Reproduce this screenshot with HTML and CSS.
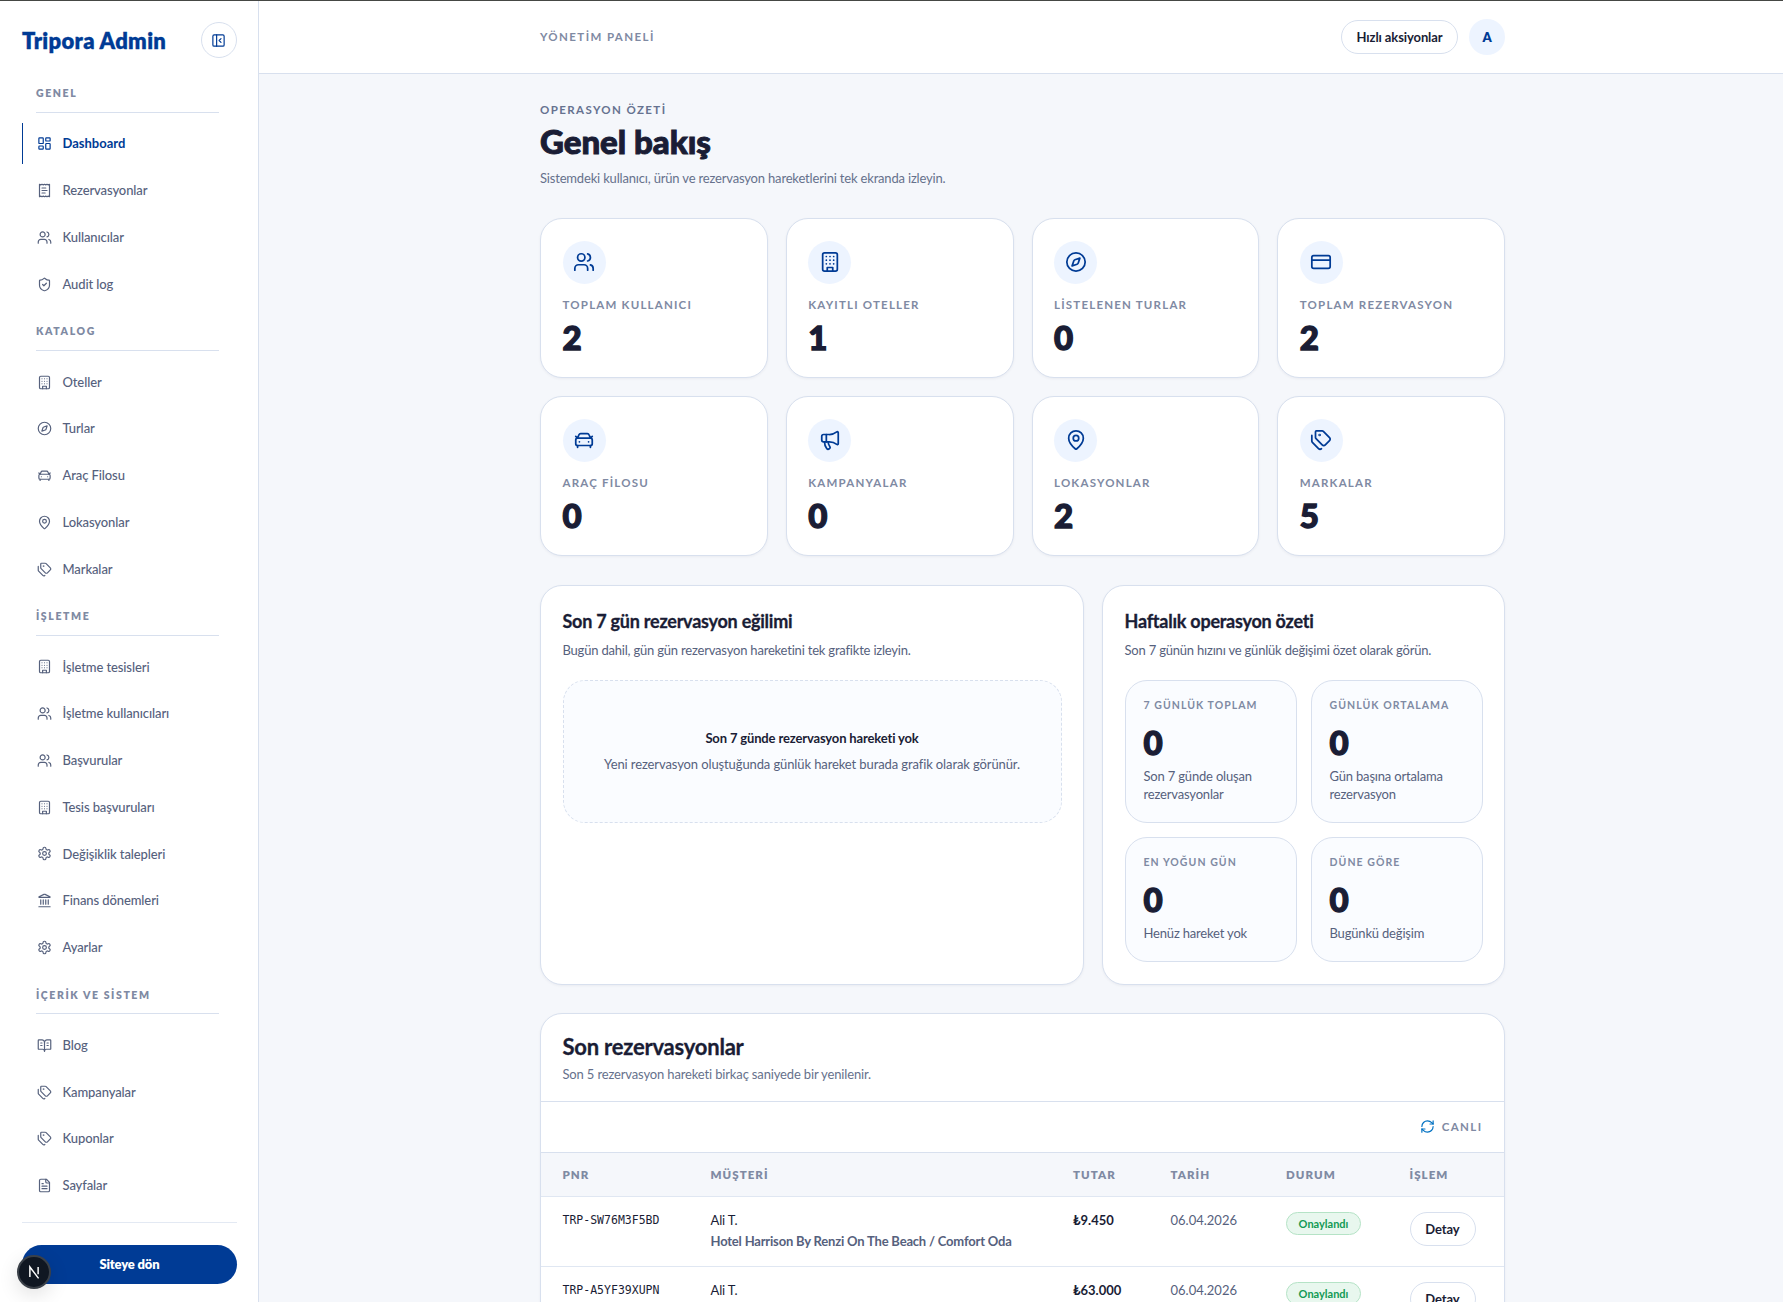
FILE: index.html
```html
<!DOCTYPE html>
<html lang="tr">
<head>
  <meta charset="UTF-8" />
  <title>Tripora Admin</title>
  <link rel="stylesheet" href="styles.css">
</head>
<body>

  <!-- icons -->
  <svg class="sprite" xmlns="http://www.w3.org/2000/svg">
    <symbol id="i-dashboard" viewBox="0 0 24 24"><rect width="7" height="9" x="3" y="3" rx="1"/><rect width="7" height="5" x="14" y="3" rx="1"/><rect width="7" height="9" x="14" y="12" rx="1"/><rect width="7" height="5" x="3" y="16" rx="1"/></symbol>
    <symbol id="i-receipt" viewBox="0 0 24 24"><path d="M4 2v20l2-1 2 1 2-1 2 1 2-1 2 1 2-1 2 1V2l-2 1-2-1-2 1-2-1-2 1-2-1-2 1Z"/><path d="M14 8H8M16 12H8M13 16H8"/></symbol>
    <symbol id="i-users" viewBox="0 0 24 24"><path d="M16 21v-2a4 4 0 0 0-4-4H6a4 4 0 0 0-4 4v2"/><circle cx="9" cy="7" r="4"/><path d="M22 21v-2a4 4 0 0 0-3-3.87M16 3.13a4 4 0 0 1 0 7.75"/></symbol>
    <symbol id="i-shield" viewBox="0 0 24 24"><path d="M20 13c0 5-3.5 7.5-7.66 8.95a1 1 0 0 1-.67-.01C7.5 20.5 4 18 4 13V6a1 1 0 0 1 1-1c2 0 4.5-1.2 6.24-2.72a1.17 1.17 0 0 1 1.52 0C14.51 3.81 17 5 19 5a1 1 0 0 1 1 1z"/><path d="m9 12 2 2 4-4"/></symbol>
    <symbol id="i-building" viewBox="0 0 24 24"><rect width="16" height="20" x="4" y="2" rx="2"/><path d="M9 22v-4h6v4M8 6h.01M16 6h.01M12 6h.01M12 10h.01M12 14h.01M16 10h.01M16 14h.01M8 10h.01M8 14h.01"/></symbol>
    <symbol id="i-compass" viewBox="0 0 24 24"><circle cx="12" cy="12" r="10"/><path d="m16.24 7.76-1.804 5.411a2 2 0 0 1-1.265 1.265L7.76 16.24l1.804-5.411a2 2 0 0 1 1.265-1.265z"/></symbol>
    <symbol id="i-car" viewBox="0 0 24 24"><path d="m21 8-2 2-1.5-3.7A2 2 0 0 0 15.646 5H8.4a2 2 0 0 0-1.903 1.257L5 10 3 8M7 14h.01M17 14h.01"/><rect width="18" height="8" x="3" y="10" rx="2"/><path d="M5 18v2M19 18v2"/></symbol>
    <symbol id="i-pin" viewBox="0 0 24 24"><path d="M20 10c0 4.993-5.539 10.193-7.399 11.799a1 1 0 0 1-1.202 0C9.539 20.193 4 14.993 4 10a8 8 0 0 1 16 0"/><circle cx="12" cy="10" r="3"/></symbol>
    <symbol id="i-tags" viewBox="0 0 24 24"><path d="M13.172 2a2 2 0 0 1 1.414.586l6.71 6.71a2.4 2.4 0 0 1 0 3.408l-4.592 4.592a2.4 2.4 0 0 1-3.408 0l-6.71-6.71A2 2 0 0 1 6 9.172V3a1 1 0 0 1 1-1z"/><path d="M2 7v6.172a2 2 0 0 0 .586 1.414l6.71 6.71a2.4 2.4 0 0 0 3.191.193"/><circle cx="10.5" cy="6.5" r=".5"/></symbol>
    <symbol id="i-settings" viewBox="0 0 24 24"><path d="M12.22 2h-.44a2 2 0 0 0-2 2v.18a2 2 0 0 1-1 1.73l-.43.25a2 2 0 0 1-2 0l-.15-.08a2 2 0 0 0-2.73.73l-.22.38a2 2 0 0 0 .73 2.73l.15.1a2 2 0 0 1 1 1.72v.51a2 2 0 0 1-1 1.74l-.15.09a2 2 0 0 0-.73 2.73l.22.38a2 2 0 0 0 2.73.73l.15-.08a2 2 0 0 1 2 0l.43.25a2 2 0 0 1 1 1.73V20a2 2 0 0 0 2 2h.44a2 2 0 0 0 2-2v-.18a2 2 0 0 1 1-1.73l.43-.25a2 2 0 0 1 2 0l.15.08a2 2 0 0 0 2.73-.73l.22-.39a2 2 0 0 0-.73-2.73l-.15-.08a2 2 0 0 1-1-1.74v-.5a2 2 0 0 1 1-1.74l.15-.09a2 2 0 0 0 .73-2.73l-.22-.38a2 2 0 0 0-2.73-.73l-.15.08a2 2 0 0 1-2 0l-.43-.25a2 2 0 0 1-1-1.73V4a2 2 0 0 0-2-2z"/><circle cx="12" cy="12" r="3"/></symbol>
    <symbol id="i-bank" viewBox="0 0 24 24"><path d="M11.12 2.198a2 2 0 0 1 1.76.006l7.866 3.847c.476.233.31.949-.22.949H3.474c-.53 0-.695-.716-.22-.949z"/><path d="M6 18v-7M10 18v-7M14 18v-7M18 18v-7M3 22h18"/></symbol>
    <symbol id="i-book" viewBox="0 0 24 24"><path d="M12 7v14M16 12h2M16 8h2M6 12h2M6 8h2"/><path d="M3 18a1 1 0 0 1-1-1V4a1 1 0 0 1 1-1h5a4 4 0 0 1 4 4 4 4 0 0 1 4-4h5a1 1 0 0 1 1 1v13a1 1 0 0 1-1 1h-6a3 3 0 0 0-3 3 3 3 0 0 0-3-3z"/></symbol>
    <symbol id="i-file" viewBox="0 0 24 24"><path d="M15 2H6a2 2 0 0 0-2 2v16a2 2 0 0 0 2 2h12a2 2 0 0 0 2-2V7Z"/><path d="M14 2v4a2 2 0 0 0 2 2h4M10 9H8M16 13H8M16 17H8"/></symbol>
    <symbol id="i-panel" viewBox="0 0 24 24"><rect width="18" height="18" x="3" y="3" rx="2"/><path d="M9 3v18M16 15l-3-3 3-3"/></symbol>
    <symbol id="i-card" viewBox="0 0 24 24"><rect width="20" height="14" x="2" y="5" rx="2"/><path d="M2 10h20"/></symbol>
    <symbol id="i-megaphone" viewBox="0 0 24 24"><path d="M11 6a13 13 0 0 0 8.4-2.8A1 1 0 0 1 21 4v12a1 1 0 0 1-1.6.8A13 13 0 0 0 11 14H5a2 2 0 0 1-2-2V8a2 2 0 0 1 2-2z"/><path d="M6 14a12 12 0 0 0 2.4 7.2 2 2 0 0 0 3.2-2.4A8 8 0 0 1 10 14M8 6v8"/></symbol>
    <symbol id="i-refresh" viewBox="0 0 24 24"><path d="M3 12a9 9 0 0 1 9-9 9.75 9.75 0 0 1 6.74 2.74L21 8"/><path d="M21 3v5h-5M21 12a9 9 0 0 1-9 9 9.75 9.75 0 0 1-6.74-2.74L3 16"/><path d="M8 16H3v5"/></symbol>
  </svg>

  <aside class="sidebar">
    <div class="sidebar-head">
      <span class="brand">Tripora Admin</span>
      <button class="collapse"><svg class="icon"><use href="#i-panel"/></svg></button>
    </div>

    <nav class="nav">
      <h2 class="nav-title">GENEL</h2>
      <a class="nav-item active"><svg class="icon"><use href="#i-dashboard"/></svg>Dashboard</a>
      <a class="nav-item"><svg class="icon"><use href="#i-receipt"/></svg>Rezervasyonlar</a>
      <a class="nav-item"><svg class="icon"><use href="#i-users"/></svg>Kullanıcılar</a>
      <a class="nav-item"><svg class="icon"><use href="#i-shield"/></svg>Audit log</a>

      <h2 class="nav-title">KATALOG</h2>
      <a class="nav-item"><svg class="icon"><use href="#i-building"/></svg>Oteller</a>
      <a class="nav-item"><svg class="icon"><use href="#i-compass"/></svg>Turlar</a>
      <a class="nav-item"><svg class="icon"><use href="#i-car"/></svg>Araç Filosu</a>
      <a class="nav-item"><svg class="icon"><use href="#i-pin"/></svg>Lokasyonlar</a>
      <a class="nav-item"><svg class="icon"><use href="#i-tags"/></svg>Markalar</a>

      <h2 class="nav-title">İŞLETME</h2>
      <a class="nav-item"><svg class="icon"><use href="#i-building"/></svg>İşletme tesisleri</a>
      <a class="nav-item"><svg class="icon"><use href="#i-users"/></svg>İşletme kullanıcıları</a>
      <a class="nav-item"><svg class="icon"><use href="#i-users"/></svg>Başvurular</a>
      <a class="nav-item"><svg class="icon"><use href="#i-building"/></svg>Tesis başvuruları</a>
      <a class="nav-item"><svg class="icon"><use href="#i-settings"/></svg>Değişiklik talepleri</a>
      <a class="nav-item"><svg class="icon"><use href="#i-bank"/></svg>Finans dönemleri</a>
      <a class="nav-item"><svg class="icon"><use href="#i-settings"/></svg>Ayarlar</a>

      <h2 class="nav-title">İÇERİK VE SİSTEM</h2>
      <a class="nav-item"><svg class="icon"><use href="#i-book"/></svg>Blog</a>
      <a class="nav-item"><svg class="icon"><use href="#i-tags"/></svg>Kampanyalar</a>
      <a class="nav-item"><svg class="icon"><use href="#i-tags"/></svg>Kuponlar</a>
      <a class="nav-item"><svg class="icon"><use href="#i-file"/></svg>Sayfalar</a>
    </nav>

    <div class="sidebar-foot">
      <a class="back-btn">Siteye dön</a>
    </div>
  </aside>

  <div class="main">
    <header class="topbar">
      <div class="wrap topbar-inner">
        <span class="topbar-title">YÖNETİM PANELİ</span>
        <div class="topbar-actions">
          <button class="pill-btn quick">Hızlı aksiyonlar</button>
          <span class="avatar">A</span>
        </div>
      </div>
    </header>

    <main class="wrap content">
      <p class="eyebrow">OPERASYON ÖZETİ</p>
      <h1 class="page-title">Genel bakış</h1>
      <p class="lead">Sistemdeki kullanıcı, ürün ve rezervasyon hareketlerini tek ekranda izleyin.</p>

      <section class="stats">
        <div class="card stat">
          <div class="stat-icon"><svg class="icon"><use href="#i-users"/></svg></div>
          <div class="stat-label">TOPLAM KULLANICI</div>
          <div class="stat-value">2</div>
        </div>
        <div class="card stat">
          <div class="stat-icon"><svg class="icon"><use href="#i-building"/></svg></div>
          <div class="stat-label">KAYITLI OTELLER</div>
          <div class="stat-value">1</div>
        </div>
        <div class="card stat">
          <div class="stat-icon"><svg class="icon"><use href="#i-compass"/></svg></div>
          <div class="stat-label">LİSTELENEN TURLAR</div>
          <div class="stat-value">0</div>
        </div>
        <div class="card stat">
          <div class="stat-icon"><svg class="icon"><use href="#i-card"/></svg></div>
          <div class="stat-label">TOPLAM REZERVASYON</div>
          <div class="stat-value">2</div>
        </div>
        <div class="card stat">
          <div class="stat-icon"><svg class="icon"><use href="#i-car"/></svg></div>
          <div class="stat-label">ARAÇ FİLOSU</div>
          <div class="stat-value">0</div>
        </div>
        <div class="card stat">
          <div class="stat-icon"><svg class="icon"><use href="#i-megaphone"/></svg></div>
          <div class="stat-label">KAMPANYALAR</div>
          <div class="stat-value">0</div>
        </div>
        <div class="card stat">
          <div class="stat-icon"><svg class="icon"><use href="#i-pin"/></svg></div>
          <div class="stat-label">LOKASYONLAR</div>
          <div class="stat-value">2</div>
        </div>
        <div class="card stat">
          <div class="stat-icon"><svg class="icon"><use href="#i-tags"/></svg></div>
          <div class="stat-label">MARKALAR</div>
          <div class="stat-value">5</div>
        </div>
      </section>

      <section class="panels">
        <div class="card panel">
          <h3 class="panel-title">Son 7 gün rezervasyon eğilimi</h3>
          <p class="panel-sub">Bugün dahil, gün gün rezervasyon hareketini tek grafikte izleyin.</p>
          <div class="empty">
            <strong class="empty-title">Son 7 günde rezervasyon hareketi yok</strong>
            <span class="empty-text">Yeni rezervasyon oluştuğunda günlük hareket burada grafik olarak görünür.</span>
          </div>
        </div>
        <div class="card panel">
          <h3 class="panel-title">Haftalık operasyon özeti</h3>
          <p class="panel-sub">Son 7 günün hızını ve günlük değişimi özet olarak görün.</p>
          <div class="tiles">
            <div class="tile">
              <div class="tile-label">7 GÜNLÜK TOPLAM</div>
              <div class="tile-value">0</div>
              <div class="tile-text">Son 7 günde oluşan rezervasyonlar</div>
            </div>
            <div class="tile">
              <div class="tile-label">GÜNLÜK ORTALAMA</div>
              <div class="tile-value">0</div>
              <div class="tile-text">Gün başına ortalama rezervasyon</div>
            </div>
            <div class="tile">
              <div class="tile-label">EN YOĞUN GÜN</div>
              <div class="tile-value">0</div>
              <div class="tile-text">Henüz hareket yok</div>
            </div>
            <div class="tile">
              <div class="tile-label">DÜNE GÖRE</div>
              <div class="tile-value">0</div>
              <div class="tile-text">Bugünkü değişim</div>
            </div>
          </div>
        </div>
      </section>

      <section class="card bookings">
        <div class="bookings-head">
          <h3 class="bookings-title">Son rezervasyonlar</h3>
          <p class="bookings-sub">Son 5 rezervasyon hareketi birkaç saniyede bir yenilenir.</p>
        </div>
        <div class="live"><svg class="icon"><use href="#i-refresh"/></svg>CANLI</div>
        <table class="table">
          <thead>
            <tr>
              <th class="c-pnr">PNR</th>
              <th class="c-customer">MÜŞTERİ</th>
              <th class="c-total">TUTAR</th>
              <th class="c-date">TARİH</th>
              <th class="c-status">DURUM</th>
              <th>İŞLEM</th>
            </tr>
          </thead>
          <tbody>
            <tr>
              <td class="pnr">TRP-SW76M3F5BD</td>
              <td>
                <div class="customer">Ali T.</div>
                <div class="product">Hotel Harrison By Renzi On The Beach / Comfort Oda</div>
              </td>
              <td class="total">₺9.450</td>
              <td class="date">06.04.2026</td>
              <td><span class="badge">Onaylandı</span></td>
              <td><button class="pill-btn detail">Detay</button></td>
            </tr>
            <tr>
              <td class="pnr">TRP-A5YF39XUPN</td>
              <td>
                <div class="customer">Ali T.</div>
              </td>
              <td class="total">₺63.000</td>
              <td class="date">06.04.2026</td>
              <td><span class="badge">Onaylandı</span></td>
              <td><button class="pill-btn detail">Detay</button></td>
            </tr>
          </tbody>
        </table>
      </section>
    </main>
  </div>

  <!-- dev tools badge -->
  <div class="dev-badge"><svg viewBox="0 0 24 24"><path d="M7.5 17.5v-11l9.5 12.5"/><path d="M16.5 6.5v8"/></svg></div>

</body>
</html>
```
FILE: styles.css
```css
* {
  box-sizing: border-box;
  margin: 0;
  padding: 0;
}
html {
  overflow: hidden;
}
body {
  display: flex;
  height: 100vh;
  overflow: hidden;
  background: #f5f7fb;
  color: #1a1d35;
  font-family: Lato, "Noto Sans", sans-serif;
  font-size: 13px;
  line-height: 1.6;
  border-top: 1px solid #454744;
}
button {
  font-family: inherit;
  color: inherit;
}
.sprite {
  display: none;
}
.icon {
  width: 15px;
  height: 15px;
  flex: none;
  fill: none;
  stroke: currentColor;
  stroke-width: 1.9;
  stroke-linecap: round;
  stroke-linejoin: round;
}

/* sidebar */
.sidebar {
  display: flex;
  flex-direction: column;
  width: 259px;
  flex: none;
  height: 100%;
  padding: 21px 21px 18px 22px;
  background: #fff;
  border-right: 1px solid #d8e0ee;
}
.sidebar-head {
  display: flex;
  justify-content: space-between;
  align-items: center;
  height: 36px;
}
.brand {
  padding-top: 1px;
  color: #003b95;
  font-size: 22px;
  font-weight: 800;
  letter-spacing: 0.3px;
  -webkit-text-stroke: 0.3px;
}
.collapse {
  display: flex;
  align-items: center;
  justify-content: center;
  width: 36px;
  height: 36px;
  border: 1px solid #d8e0ee;
  border-radius: 50%;
  background: #fff;
  color: #003b95;
}
.collapse .icon {
  margin-right: 1px;
}
.nav {
  display: flex;
  flex-direction: column;
  gap: 6px;
  padding-top: 15px;
}
.nav-title {
  margin: 12.7px 18px 4.7px 14px;
  padding-bottom: 10px;
  border-bottom: 1px solid #d8e0ee;
  color: #7f8aa3;
  font-size: 10.5px;
  font-weight: 800;
  letter-spacing: 1.6px;
}
.nav-title:first-child {
  margin-top: 12px;
}
.nav-item {
  display: flex;
  align-items: center;
  gap: 10.5px;
  height: 40.75px;
  padding-left: 14px;
  border-left: 1px solid transparent;
  color: #56617d;
  font-weight: 500;
  letter-spacing: -0.1px;
}
.nav-item.active {
  border-left-color: #003b95;
  color: #003b95;
  font-weight: 700;
  letter-spacing: 0;
}
.sidebar-foot {
  margin-top: auto;
  padding-top: 22px;
  border-top: 1px solid #e3e9f3;
}
.back-btn {
  display: flex;
  align-items: center;
  justify-content: center;
  height: 39px;
  border-radius: 20px;
  background: #003b95;
  color: #fff;
  font-weight: 800;
  letter-spacing: -0.15px;
}

/* topbar */
.main {
  flex: 1;
}
.wrap {
  width: 965px;
  margin-left: 281px;
}
.topbar {
  height: 73px;
  background: #fff;
  border-bottom: 1px solid #d8e0ee;
}
.topbar-inner {
  display: flex;
  align-items: center;
  justify-content: space-between;
  height: 72px;
}
.topbar-title {
  color: #7f8aa3;
  font-size: 11.5px;
  font-weight: 700;
  letter-spacing: 1.4px;
}
.topbar-actions {
  display: flex;
  align-items: center;
  gap: 11px;
}
.pill-btn {
  height: 34px;
  border: 1px solid #d8e0ee;
  border-radius: 17px;
  background: #fff;
  font-size: 13px;
  font-weight: 700;
  letter-spacing: -0.1px;
}
.quick {
  width: 117px;
  padding-bottom: 1px;
}
.avatar {
  width: 36px;
  height: 36px;
  border-radius: 50%;
  background: #edf4ff;
  color: #003b95;
  font-weight: 800;
  line-height: 36px;
  text-align: center;
}

/* page heading */
.content {
  padding-top: 26.5px;
}
.eyebrow {
  color: #667290;
  font-size: 11.5px;
  font-weight: 700;
  letter-spacing: 1.4px;
}
.page-title {
  font-size: 33px;
  font-weight: 900;
  line-height: 44px;
  -webkit-text-stroke: 1px;
}
.lead {
  margin-top: 5.5px;
  color: #66718c;
  letter-spacing: -0.177px;
}

/* cards */
.card {
  background: #fff;
  border: 1px solid #d8e0ee;
  border-radius: 22px;
  box-shadow: 0 1px 3px rgba(26, 29, 53, 0.05);
}
.stats {
  display: grid;
  grid-template-columns: repeat(4, 1fr);
  gap: 18px;
  margin-top: 28.8px;
}
.stat {
  height: 160px;
  padding: 22px 21.5px;
}
.stat-icon {
  display: flex;
  align-items: center;
  justify-content: center;
  width: 43px;
  height: 43px;
  border-radius: 50%;
  background: #edf4ff;
  color: #003b95;
}
.stat-icon .icon {
  width: 22px;
  height: 22px;
}
.stat-label {
  margin-top: 12px;
  color: #7f8aa3;
  font-size: 11.5px;
  font-weight: 700;
  letter-spacing: 1.2px;
}
.stat-value,
.tile-value {
  font-size: 33px;
  font-weight: 900;
  line-height: 36px;
  -webkit-text-stroke: 1.4px;
}
.stat-value {
  margin-top: 4.8px;
}

.panels {
  display: grid;
  grid-template-columns: 1.35fr 1fr;
  gap: 18px;
  margin-top: 29px;
}
.panel {
  height: 400px;
  padding: 22px 21.5px;
}
.panel-title {
  font-size: 18px;
  font-weight: 700;
  line-height: 26px;
  letter-spacing: -0.24px;
  -webkit-text-stroke: 0.3px;
}
.panel-sub {
  margin-top: 6px;
  color: #56617d;
  letter-spacing: -0.2px;
}
.empty {
  display: flex;
  flex-direction: column;
  align-items: center;
  justify-content: center;
  gap: 5px;
  height: 143.5px;
  margin-top: 19px;
  border: 1px dashed #d8e0ee;
  border-radius: 22px;
  background: #fafcff;
}
.empty-title {
  font-weight: 700;
  letter-spacing: -0.15px;
}
.empty-text {
  color: #56617d;
  letter-spacing: -0.11px;
}
.tiles {
  display: grid;
  grid-template-columns: 1fr 1fr;
  grid-template-rows: 143px 125px;
  gap: 14px;
  margin-top: 19px;
}
.tile {
  padding: 16.5px 18px;
  border: 1px solid #d8e0ee;
  border-radius: 22px;
  background: #fafcff;
}
.tile-label {
  color: #7f8aa3;
  font-size: 10.5px;
  font-weight: 700;
  letter-spacing: 1.05px;
}
.tile-value {
  margin-top: 9.5px;
}
.tile-text {
  margin-top: 7.5px;
  color: #56617d;
  line-height: 18px;
  letter-spacing: -0.18px;
}

/* bookings */
.bookings {
  margin-top: 28px;
  height: 400px;
  overflow: hidden;
}
.bookings-head {
  height: 88px;
  padding: 18px 21.5px;
  border-bottom: 1px solid #d8e0ee;
}
.bookings-title {
  font-size: 22px;
  font-weight: 700;
  line-height: 30px;
  letter-spacing: -0.22px;
  -webkit-text-stroke: 0.3px;
}
.bookings-sub {
  margin-top: 2px;
  color: #66718c;
  letter-spacing: -0.15px;
}
.live {
  display: flex;
  align-items: center;
  justify-content: flex-end;
  gap: 7px;
  height: 51px;
  padding-right: 21.5px;
  border-bottom: 1px solid #d8e0ee;
  color: #7f8aa3;
  font-size: 11.5px;
  font-weight: 700;
  letter-spacing: 1.4px;
}
.live .icon {
  color: #0071c2;
}
.table {
  width: 963px;
  table-layout: fixed;
  border-collapse: separate;
  border-spacing: 0;
}
.table th {
  height: 44px;
  padding: 2px 0 0 21.5px;
  background: #f5f7fb;
  border-bottom: 1px solid #e0e7f2;
  color: #7f8aa3;
  font-size: 11.5px;
  font-weight: 800;
  letter-spacing: 1.05px;
  text-align: left;
}
.table td {
  height: 70px;
  padding: 13.5px 0 0 21.5px;
  border-bottom: 1px solid #e0e7f2;
  vertical-align: top;
}
.c-pnr { width: 148px; }
.c-customer { width: 362.5px; }
.c-total { width: 97.5px; }
.c-date { width: 115.5px; }
.c-status { width: 123.5px; }
.table .pnr {
  font-family: "DejaVu Sans Mono", monospace;
  font-size: 11.5px;
  line-height: 21px;
}
.customer {
  letter-spacing: -0.15px;
}
.product {
  color: #56617d;
  font-weight: 700;
  letter-spacing: -0.19px;
}
.total {
  font-weight: 700;
}
.date {
  color: #56617d;
}
.badge {
  display: block;
  width: 75px;
  height: 23px;
  margin-top: 1.5px;
  border: 1px solid #b5e3c6;
  border-radius: 12px;
  background: #e8f7ee;
  color: #129a55;
  font-size: 11px;
  font-weight: 700;
  line-height: 21px;
  text-align: center;
}
.detail {
  width: 66px;
  margin-top: 1.5px;
}

.dev-badge {
  position: absolute;
  left: 17px;
  top: 1255px;
  width: 34px;
  height: 34px;
  border: 2px solid #3a4048;
  border-radius: 50%;
  background: #101722;
  box-shadow: 0 6px 20px rgba(0, 0, 0, 0.12);
}
.dev-badge svg {
  display: block;
  width: 22px;
  height: 22px;
  margin: 4px;
  fill: none;
  stroke: #fff;
  stroke-width: 1.6;
}
```
